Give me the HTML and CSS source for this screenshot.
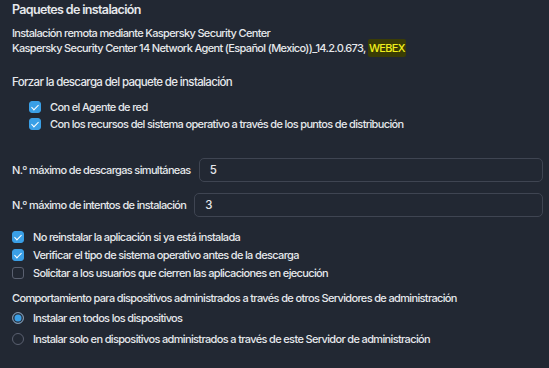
FILE: index.html
```html
<!DOCTYPE html>
<html lang="es">
<head>
<meta charset="utf-8">
<link rel="stylesheet" href="styles.css">
</head>
<body>
<div class="page">
  <h2 class="title">Paquetes de instalación</h2>
  <div class="info">
    <div>Instalación remota mediante Kaspersky Security Center</div>
    <div>Kaspersky Security Center 14 Network Agent (Español (Mexico))_14.2.0.673, <mark class="hl">WEBEX</mark></div>
  </div>

  <div class="section-label force">Forzar la descarga del paquete de instalación</div>
  <div class="list indented">
    <label class="opt"><span class="cb on"></span>Con el Agente de red</label>
    <label class="opt"><span class="cb on"></span>Con los recursos del sistema operativo a través de los puntos de distribución</label>
  </div>

  <div class="fields">
    <div class="field"><span class="flabel">N.º máximo de descargas simultáneas</span><div class="input">5</div></div>
    <div class="field"><span class="flabel">N.º máximo de intentos de instalación</span><div class="input">3</div></div>
  </div>

  <div class="list checks">
    <label class="opt"><span class="cb on"></span>No reinstalar la aplicación si ya está instalada</label>
    <label class="opt"><span class="cb on"></span>Verificar el tipo de sistema operativo antes de la descarga</label>
    <label class="opt"><span class="cb"></span>Solicitar a los usuarios que cierren las aplicaciones en ejecución</label>
  </div>

  <div class="section-label behav">Comportamiento para dispositivos administrados a través de otros Servidores de administración</div>
  <div class="list radios">
    <label class="opt"><span class="rb on"></span>Instalar en todos los dispositivos</label>
    <label class="opt"><span class="rb"></span>Instalar solo en dispositivos administrados a través de este Servidor de administración</label>
  </div>
</div>
</body>
</html>
```
FILE: styles.css
```css
html, body {
  margin: 0;
  padding: 0;
  background: #222833;
}
body {
  font-family: Inter, "Noto Sans", sans-serif;
  font-size: 11px;
  font-weight: 500;
  letter-spacing: -0.65px;
  color: #e6e8ec;
  width: 549px;
  height: 368px;
  overflow: hidden;
}
.page {
  padding: 2px 6px 0 12px;
}
.title {
  margin: 0;
  font-size: 12.5px;
  font-weight: 600;
  letter-spacing: -0.65px;
  line-height: 16px;
}
.info {
  margin-top: 8px;
  line-height: 15px;
}
.hl {
  background: #3a3c05;
  color: #f0ef1c;
  padding: 2px 1px;
  border-radius: 2px;
}
.section-label {
  line-height: 15px;
}
.force {
  margin-top: 19px;
  font-size: 11.5px;
}
.list {
  display: flex;
  flex-direction: column;
}
.indented {
  margin-top: 11px;
  padding-left: 17px;
  gap: 5px;
}
.opt {
  display: flex;
  align-items: center;
  gap: 9px;
  line-height: 12px;
}
.cb {
  width: 12px;
  height: 12px;
  box-sizing: border-box;
  border-radius: 3px;
  border: 1px solid #5a6070;
  flex: none;
  position: relative;
}
.cb.on {
  background: #3a9fe6;
  border-color: #3a9fe6;
}
.cb.on::after {
  content: "";
  position: absolute;
  left: 3px;
  top: 1px;
  width: 3px;
  height: 6px;
  border: solid #ffffff;
  border-width: 0 1.6px 1.6px 0;
  transform: rotate(45deg);
}
.fields {
  margin-top: 28px;
  display: flex;
  flex-direction: column;
  gap: 11px;
}
.field {
  display: flex;
  align-items: center;
  gap: 8px;
}
.flabel {
  flex: none;
}
.input {
  flex: 1;
  height: 24px;
  box-sizing: border-box;
  border: 1px solid #3f4552;
  border-radius: 5px;
  padding-left: 10px;
  display: flex;
  align-items: center;
  font-size: 11.5px;
}
.checks {
  margin-top: 14px;
  gap: 6px;
}
.behav {
  margin-top: 12px;
}
.radios {
  margin-top: 6px;
  gap: 9px;
}
.rb {
  width: 12px;
  height: 12px;
  box-sizing: border-box;
  border-radius: 50%;
  border: 1px solid #5a6070;
  flex: none;
  position: relative;
}
.rb.on {
  border: 1.5px solid #8a93a3;
  background: #3a9fe6;
  box-shadow: inset 0 0 0 1.5px #2b3340;
}
```
